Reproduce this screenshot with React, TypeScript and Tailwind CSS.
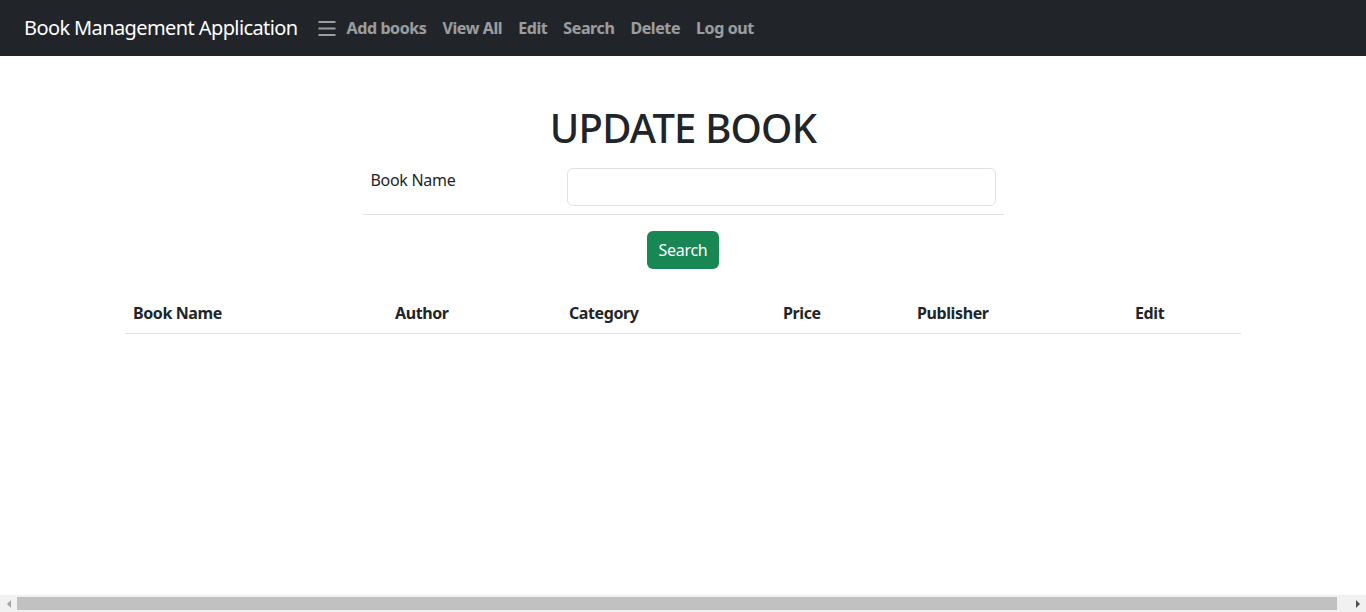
import React from "react";

const navLinks = ["Add books", "View All", "Edit", "Search", "Delete", "Log out"];

const columns = [
  { label: "Book Name", width: "w-[262px]" },
  { label: "Author", width: "w-[174px]" },
  { label: "Category", width: "w-[214px]" },
  { label: "Price", width: "w-[134px]" },
  { label: "Publisher", width: "w-[218px]" },
  { label: "Edit", width: "w-[114px]" },
];

const App = () => {
  return (
    <div className="w-full min-h-[612px] bg-white text-[#212529] font-['Noto_Sans',sans-serif]">
      {/* Navbar */}
      <nav className="w-full h-14 bg-[#212529] flex items-center px-6">
        <span className="text-[20px] text-white mr-5 leading-[30px] tracking-[-0.6px]">
          Book Management Application
        </span>
        <button className="flex items-center justify-center w-[18px] h-5 mr-[3px] text-white/55">
          <svg width="18" height="16" viewBox="0 0 18 16" fill="none">
            <path
              d="M0.5 2h17M0.5 8.5h17M0.5 15h17"
              stroke="currentColor"
              strokeWidth="2"
            />
          </svg>
        </button>
        <ul className="flex items-center">
          {navLinks.map((link) => (
            <li key={link}>
              <a className="px-2 text-base font-bold text-white/55 cursor-pointer tracking-[-0.4px]">
                {link}
              </a>
            </li>
          ))}
        </ul>
      </nav>

      {/* Content */}
      <div className="w-full flex flex-col items-center">
        <h1 className="mt-12 mb-2 text-[40px] leading-[48px] font-medium tracking-[-0.8px]">
          UPDATE BOOK
        </h1>

        <table className="w-[641px] border-collapse">
          <tbody>
            <tr className="border-b border-[#dee2e6]">
              <td className="w-[196px] p-2 align-top text-base leading-6 tracking-[-0.3px]">
                Book Name
              </td>
              <td className="p-2">
                <input
                  type="text"
                  className="w-full h-[38px] border border-[#dee2e6] rounded-md px-3 outline-none"
                />
              </td>
            </tr>
          </tbody>
        </table>

        <button className="mt-4 h-[38px] px-3 rounded-md bg-[#198754] text-white text-base tracking-[-0.3px]">
          Search
        </button>

        <table className="mt-[25px] w-[1116px] border-collapse">
          <thead>
            <tr className="border-b border-[#dee2e6]">
              {columns.map((col) => (
                <th
                  key={col.label}
                  className={`${col.width} px-2 pt-[7px] pb-2 text-left text-base font-bold leading-6 tracking-[-0.4px]`}
                >
                  {col.label}
                </th>
              ))}
            </tr>
          </thead>
          <tbody />
        </table>
      </div>

      {/* Browser horizontal scrollbar */}
      <div className="fixed bottom-0 left-0 right-0 h-[17px] bg-[#f1f1f1] flex items-center">
        <div className="w-[17px] h-full flex items-center justify-center">
          <svg width="6" height="8" viewBox="0 0 6 8">
            <path d="M5 0v8L1 4z" fill="#a3a3a3" />
          </svg>
        </div>
        <div className="flex-1 h-[13px] bg-[#c1c1c1] mr-[12px]" />
        <div className="w-[17px] h-full flex items-center justify-center">
          <svg width="6" height="8" viewBox="0 0 6 8">
            <path d="M1 0v8l4-4z" fill="#505050" />
          </svg>
        </div>
      </div>
    </div>
  );
};

export default App;
